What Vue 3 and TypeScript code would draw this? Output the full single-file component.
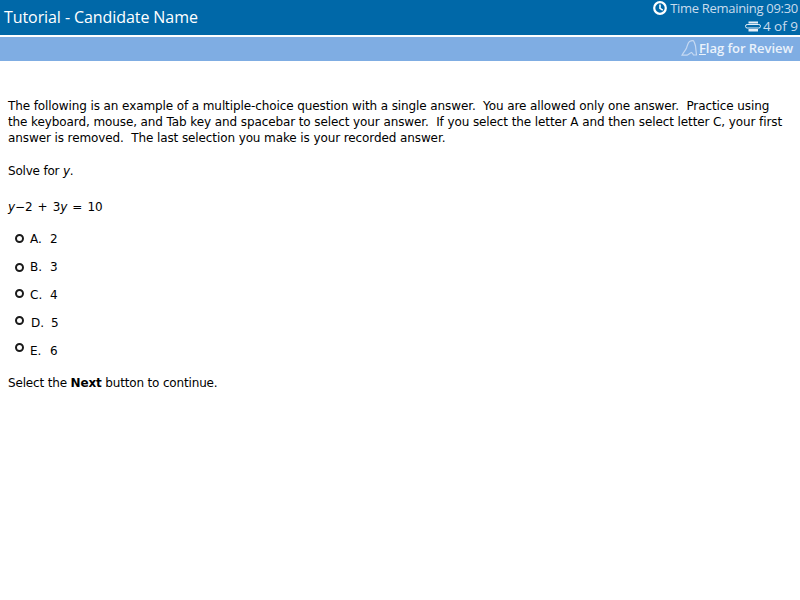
<script setup lang="ts">
interface Option { letter: string; value: string; radioTop: number; textGap: number }
const options: Option[] = [
  { letter: 'A.', value: '2', radioTop: 3, textGap: 6 },
  { letter: 'B.', value: '3', radioTop: 4, textGap: 6 },
  { letter: 'C.', value: '4', radioTop: 2, textGap: 6 },
  { letter: 'D.', value: '5', radioTop: 1, textGap: 7 },
  { letter: 'E.', value: '6', radioTop: 0, textGap: 6 },
]
</script>

<template>
  <div class="page">
    <header class="topbar">
      <div class="title">Tutorial - Candidate Name</div>
      <div class="status">
        <div class="status-line">
          <svg class="clock" viewBox="0 0 14 14" width="14" height="14">
            <circle cx="7" cy="7" r="5.8" fill="none" stroke="#fff" stroke-width="2.2" />
            <path d="M7 3.4V7.4L9.8 9.2" fill="none" stroke="#fff" stroke-width="1.6" />
          </svg>
          <span>Time Remaining 09:30</span>
        </div>
        <div class="status-line count">
          <svg class="pages" viewBox="0 0 16 11" width="16" height="11">
            <rect x="3.5" y="0.5" width="9.5" height="2" fill="#e6eff8" />
            <rect x="0.5" y="3.5" width="15" height="3.5" rx="1.7" fill="none" stroke="#e6eff8" />
            <rect x="3.5" y="8" width="9.5" height="2.5" fill="#e6eff8" />
          </svg>
          <span>4 of 9</span>
        </div>
      </div>
    </header>
    <div class="flagbar">
      <svg class="flag" viewBox="0 0 17 16" width="17" height="16">
        <path d="M1 15.2C2.5 12 4.5 10.5 5.5 8C6.5 5 7 2.5 8.5 1.5C10 .8 11.5.6 12.5.8C13.5 2.5 14 4 14.5 6L15.5 15H12.5C12 14 11.5 13 10.5 12.5C9 13 7.5 14.5 6 15.2Z" fill="none" stroke="#c6d9f2" stroke-width="1.2" />
      </svg>
      <span class="flag-text"><span class="underline">F</span>lag for Review</span>
    </div>
    <main class="content">
      <p class="intro">The following is an example of a multiple-choice question with a single answer.&nbsp; You are allowed only one answer.&nbsp; Practice using the keyboard, mouse, and Tab key and spacebar to select your answer.&nbsp; If you select the letter A and then select letter C, your first answer is removed.&nbsp; The last selection you make is your recorded answer.</p>
      <p class="solve">Solve for <i>y</i>.</p>
      <p class="equation"><i>y</i>−2 + 3<i>y</i> = 10</p>
      <ul class="options">
        <li v-for="o in options" :key="o.letter" class="option">
          <span class="radio" :style="{ marginTop: o.radioTop + 'px', marginRight: o.textGap + 'px' }"></span>
          <span class="letter">{{ o.letter }}</span>
          <span>{{ o.value }}</span>
        </li>
      </ul>
      <p class="next">Select the <b>Next</b> button to continue.</p>
    </main>
  </div>
</template>

<style>
html, body { margin: 0; background: #fff; }
</style>

<style scoped>
.page {
  width: 800px;
  height: 600px;
  overflow: hidden;
  background: #fff;
  font-family: "DejaVu Sans", Verdana, sans-serif;
  font-size: 12px;
  color: #000;
}
.topbar {
  height: 35px;
  background: #0068a8;
  color: #fff;
  display: flex;
  justify-content: space-between;
  box-sizing: border-box;
  padding: 0 2px 0 4px;
}
.title {
  font-family: "Open Sans", sans-serif;
  font-size: 16px;
  line-height: 34px;
  letter-spacing: -0.08px;
}
.status {
  display: flex;
  flex-direction: column;
  align-items: flex-end;
  margin-top: -1px;
  font-family: "Open Sans", sans-serif;
  font-size: 13px;
  color: #c9dced;
}
.status-line {
  display: flex;
  align-items: center;
  height: 18px;
  gap: 3px;
  letter-spacing: -0.3px;
}
.count { gap: 2px; letter-spacing: 0; font-size: 13.5px; }
.clock { flex: none; }
.flagbar {
  margin-top: 2px;
  height: 24px;
  background: #7fade3;
  color: #eaf2fb;
  display: flex;
  align-items: center;
  justify-content: flex-end;
  padding: 0 7px 2px 0;
  gap: 1px;
  box-sizing: border-box;
  font-family: "Open Sans", sans-serif;
  font-size: 13px;
  font-weight: 600;
  letter-spacing: -0.05px;
}
.underline { text-decoration: underline; }
.content { padding: 37px 8px 0; }
p { margin: 0; }
.intro { line-height: 16px; width: 784px; letter-spacing: -0.1px; }
.solve { margin-top: 17px; line-height: 16px; letter-spacing: -0.2px; }
.equation { margin-top: 20px; line-height: 16px; letter-spacing: -0.1px; word-spacing: 1.4px; }
.options {
  list-style: none;
  margin: 16px 0 0;
  padding: 0 0 0 7px;
}
.option {
  display: flex;
  align-items: flex-start;
  height: 28px;
  line-height: 16px;
}
.radio {
  flex: none;
  box-sizing: border-box;
  width: 9px;
  height: 9px;
  border: 2px solid #1a1a1a;
  border-radius: 50%;
}
.letter { width: 20px; }
.next { margin-top: 4px; line-height: 16px; letter-spacing: -0.16px; }
</style>
